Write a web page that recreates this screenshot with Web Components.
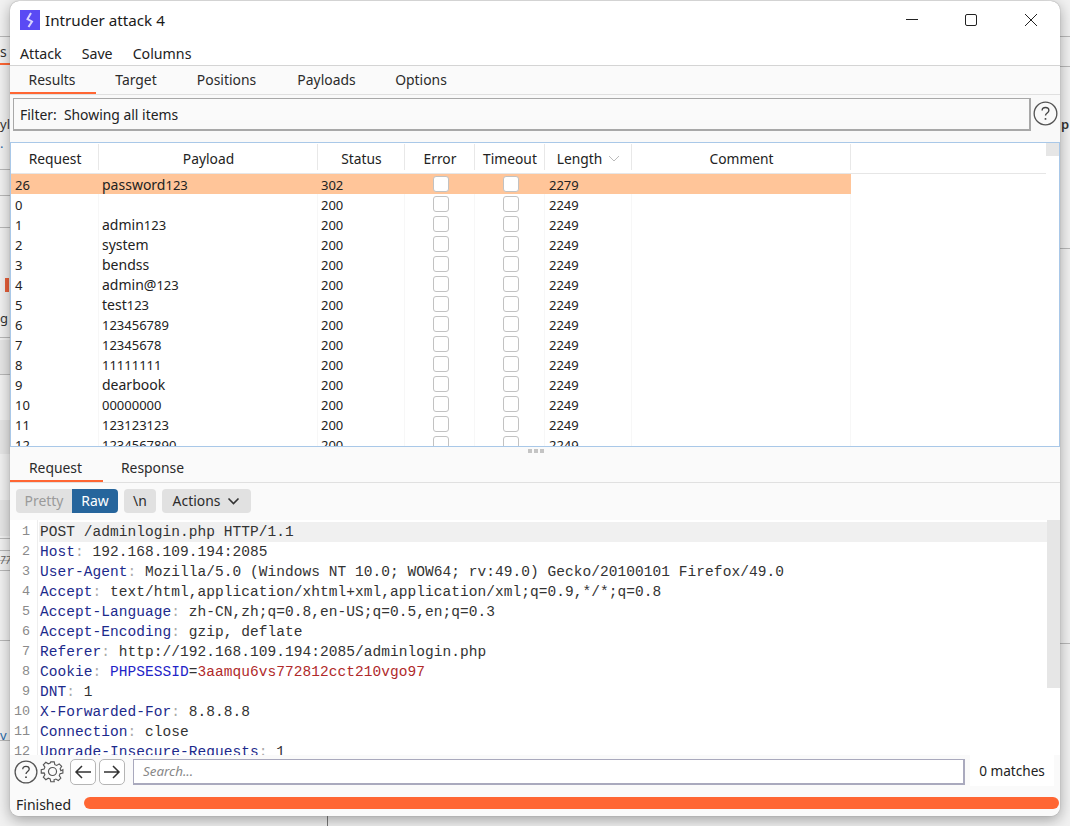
<!DOCTYPE html>
<html><head><meta charset="utf-8"><style>
html,body{margin:0;padding:0;height:100%;overflow:hidden}
body{width:1070px;height:826px;position:relative;font-family:"Noto Sans",sans-serif}
</style></head><body>
<desk-top></desk-top>
<script>
const UI='"Noto Sans","Open Sans",sans-serif';
function def(name,css,html){
  customElements.define(name,class extends HTMLElement{
    constructor(){super();const r=this.attachShadow({mode:'open'});r.innerHTML='<style>'+css+'</style>'+html;}
  });
}
const dg=s=>s.replace(/\d+/g,m=>`<span class="d">${m}</span>`);
def('win-title',`:host{display:flex;flex:none;align-items:center;height:37px;padding-left:10px;font:15.2px ${UI};color:#1a1a1a}
.l{width:20px;height:20px;background:#5a4af4;margin-right:5px;display:block}
.sp{flex:1}.b{width:59px;height:37px;display:flex;align-items:center;justify-content:center}`,
`<svg class="l" viewBox="0 0 20 20"><path d="M11 3 L7.5 9 L12 11.5 L8.5 17" fill="none" stroke="#d9d4ff" stroke-width="2"/></svg><span>Intruder attack 4</span><span class="sp"></span>
<span class="b"><svg width="13" height="13"><path d="M0 6.5H12" stroke="#222" fill="none"/></svg></span>
<span class="b"><svg width="14" height="14"><rect x=".5" y="1.5" width="11" height="11" rx="1.5" stroke="#222" fill="none"/></svg></span>
<span class="b"><svg width="14" height="14"><path d="M1 1L13 13M13 1L1 13" stroke="#222" fill="none"/></svg></span>`);
def('win-menu',`:host{display:flex;flex:none;height:28px;align-items:center;padding-left:10px;gap:20px;font:14.2px ${UI};color:#222;border-bottom:1px solid #d4d4d4;box-sizing:border-box;padding-top:3px}`,
`<span>Attack</span><span>Save</span><span>Columns</span>`);
def('tab-bar',`:host{display:flex;flex:none;height:29px;background:#fafafa;border-bottom:1px solid #e0e0e0;box-sizing:border-box;font:13.9px ${UI};color:#2b2b2b}`,`<slot></slot>`);
def('tab-item',`:host{display:flex;align-items:center;justify-content:center;box-sizing:border-box;border-bottom:2px solid transparent;padding-top:1px}
:host([active]){border-bottom-color:#ff6633;padding-right:2px}`,`<slot></slot>`);
def('filter-bar',`:host{display:flex;flex:none;height:47px;background:#f9f9f9;padding:3px 0 0 3px;box-sizing:border-box;font:13.9px ${UI};color:#222}
.f{width:1018px;height:33px;border:1px solid #a8a8a8;border-bottom-width:2px;border-right-width:2px;box-sizing:border-box;display:flex;align-items:center;padding:1px 0 0 6px;background:#fafafa}
.h{margin:3px 0 0 2px}`,
`<div class="f">Filter:&nbsp; Showing all items</div><help-icon class="h" style="width:25px;height:25px"></help-icon>`);
def('help-icon',`:host{display:block;width:24px;height:24px;flex:none}svg{display:block;width:100%;height:100%}`,
`<svg viewBox="0 0 26 26"><circle cx="13" cy="13" r="11.8" fill="none" stroke="#555" stroke-width="1.4"/><path d="M9.5 10c0-2 1.5-3.2 3.5-3.2s3.5 1.2 3.5 3c0 2.6-3.5 2.7-3.5 5.4" fill="none" stroke="#444" stroke-width="1.4"/><circle cx="13" cy="18.6" r="1" fill="#444"/></svg>`);
const rows=[['26','password123','302','2279'],['0','','200','2249'],['1','admin123','200','2249'],['2','system','200','2249'],['3','bendss','200','2249'],['4','admin@123','200','2249'],['5','test123','200','2249'],['6','123456789','200','2249'],['7','12345678','200','2249'],['8','11111111','200','2249'],['9','dearbook','200','2249'],['10','00000000','200','2249'],['11','123123123','200','2249'],['12','1234567890','200','2249']];
const heads=['Request','Payload','Status','Error','Timeout','Length','Comment'];
def('result-table',`:host{display:block;flex:none;height:305px;border:1px solid #a9c8e8;box-sizing:border-box;background:#fff;overflow:hidden;position:relative;font:14px ${UI};color:#222}
.d{font-size:13px}
.g{display:grid;grid-template-columns:88px 219px 87px 70px 70px 87px 219px 1fr;width:1035px}
.h{height:31px;padding-top:1px;display:flex;align-items:center;justify-content:center;font-size:13.8px;border-bottom:1px solid #e6e6e6;box-sizing:border-box;position:relative}
.h::after{content:"";position:absolute;right:0;top:1px;bottom:3px;width:1px;background:#e8e8e8}
.h.n::after{display:none}
.c{height:20px;line-height:22px;padding-left:3px;box-sizing:border-box;white-space:nowrap;border-right:1px solid #f7f7f7}
.c.a{padding-left:4px}
.c.x{display:flex;align-items:center;justify-content:center;padding:0 0 0 2px}
.c.sel{background:#ffc599;border-right-color:#ffc599}.c.e{border-right:0}
.k{width:16px;height:16px;border:1.5px solid #c2c2c2;border-radius:3px;background:#fff;box-sizing:border-box}
.sb{position:absolute;right:0;top:0;width:13px;height:13px;background:#e6e6e6}
svg{margin-left:6px}`,
`<div class="g">`+heads.map(h=>`<div class="h">${h}${h=='Length'?'<svg width="12" height="7"><path d="M1 1l5 5 5-5" fill="none" stroke="#bbb"/></svg>':''}</div>`).join('')+`<div class="h n"></div>`+
rows.map((r,i)=>{const s=i==0?' sel':'';return `<div class="c a${s}">${dg(r[0])}</div><div class="c${s}">${dg(r[1])}</div><div class="c${s}">${dg(r[2])}</div><div class="c x${s}"><span class="k"></span></div><div class="c x${s}"><span class="k"></span></div><div class="c a${s}">${dg(r[3])}</div><div class="c${s}"></div><div class="c e"></div>`}).join('')+`</div><div class="sb"></div>`);
def('drag-dots',`:host{position:absolute;left:528px;top:449px;display:flex;gap:2px;z-index:2}i{width:4px;height:4px;background:#c4c4c4;display:block}`,`<i></i><i></i><i></i>`);
def('view-bar',`:host{display:flex;flex:none;height:37px;align-items:center;padding:0 0 2px 6px;box-sizing:border-box;font:13.9px ${UI};color:#2b2b2b;gap:6px;background:#fafafa}
.s{display:flex}.b{height:24px;display:flex;align-items:center;justify-content:center;background:#e1e1e1;border-radius:4px;box-sizing:border-box}
.pr{width:56px;color:#9a9a9a;border-radius:4px 0 0 4px}.ra{width:46px;background:#26659c;color:#fff;border-radius:0 4px 4px 0}
.n{width:32px}.a{width:89px;gap:7px}`,
`<div class="s"><div class="b pr">Pretty</div><div class="b ra">Raw</div></div><div class="b n">\\n</div><div class="b a">Actions<svg width="13" height="8"><path d="M1.5 1.5L6.5 6.5 11.5 1.5" fill="none" stroke="#333" stroke-width="1.6"/></svg></div>`);
const req=[
 [['POST /adminlogin.php HTTP/1.1','t']],
 [['Host','k'],[':','c'],[' 192.168.109.194:2085','t']],
 [['User-Agent','k'],[':','c'],[' Mozilla/5.0 (Windows NT 10.0; WOW64; rv:49.0) Gecko/20100101 Firefox/49.0','t']],
 [['Accept','k'],[':','c'],[' text/html,application/xhtml+xml,application/xml;q=0.9,*/*;q=0.8','t']],
 [['Accept-Language','k'],[':','c'],[' zh-CN,zh;q=0.8,en-US;q=0.5,en;q=0.3','t']],
 [['Accept-Encoding','k'],[':','c'],[' gzip, deflate','t']],
 [['Referer','k'],[':','c'],[' http://192.168.109.194:2085/adminlogin.php','t']],
 [['Cookie','k'],[':','c'],[' ','t'],['PHPSESSID','b'],['=','t'],['3aamqu6vs772812cct210vgo97','r']],
 [['DNT','k'],[':','c'],[' 1','t']],
 [['X-Forwarded-For','k'],[':','c'],[' 8.8.8.8','t']],
 [['Connection','k'],[':','c'],[' close','t']],
 [['Upgrade-Insecure-Requests','k'],[':','c'],[' 1','t']]];
def('code-view',`:host{display:block;flex:none;height:235px;overflow:hidden;position:relative;background:#fff;font:14.5px "Liberation Mono",monospace;color:#333}
.w{padding-top:2px;position:relative}
.w::before{content:"";position:absolute;left:27px;top:0;bottom:0;width:1px;background:#eee}
.r{display:flex;height:20px;line-height:20px;white-space:pre}
.n{width:20px;margin-right:9px;flex:none;text-align:right;color:#8a8a8a;font-size:13.4px}
.r.f .x{background:#f0f0f0}.x{flex:1;padding-left:1px;letter-spacing:.05px}
.k{color:#1c2a8c}.c{color:#aaa}.t{color:#333}.b{color:#1f24c8}.r2{color:#b02a2a}
.sb{position:absolute;right:0;top:0;width:13px;height:168px;background:#e6e6e6}`,
`<div class="w">`+req.map((l,i)=>`<div class="r${i==0?' f':''}"><span class="n">${i+1}</span><span class="x">`+l.map(([s,c])=>`<span class="${c=='r'?'r2':c}">${s}</span>`).join('')+`</span></div>`).join('')+`</div><div class="sb"></div>`);
def('search-bar',`:host{display:flex;flex:none;align-items:center;height:35px;padding:0 0 2px 4px;box-sizing:border-box;background:#fafafa;font:13.6px ${UI};color:#222}
.ib{width:26px;height:26px;border:1px solid #b5b5b5;border-radius:5px;box-sizing:border-box;display:flex;align-items:center;justify-content:center;background:#fff;flex:none}
.i{flex:none;width:832px;height:26px;border:1px solid #a9a9bd;border-width:1px 2px 2px 1px;box-sizing:border-box;margin-left:8px;display:flex;align-items:center;padding-left:9px;background:#fff;font:italic 13.4px ${UI};color:#888}
.m{width:84px;height:32px;background:#fff;margin:-3px 0 0 5px;display:flex;align-items:center;justify-content:center}`,
`<help-icon></help-icon><svg width="25" height="25" viewBox="0 0 26 26" style="margin:0 5px 0 2px;flex:none"><path d="M11 2h4l.7 3.2 2.2.9 2.8-1.8 2.9 2.9-1.8 2.8.9 2.2L25 11v4l-3.3.7-.9 2.2 1.8 2.8-2.9 2.9-2.8-1.8-2.2.9L15 25h-4l-.7-3.3-2.2-.9-2.8 1.8-2.9-2.9 1.8-2.8-.9-2.2L0 15v-4l3.3-.7.9-2.2-1.8-2.8 2.9-2.9 2.8 1.8 2.2-.9z" transform="translate(1.3 1.2) scale(.9)" fill="none" stroke="#555" stroke-width="1.3"/><circle cx="13" cy="13" r="4.2" fill="none" stroke="#555" stroke-width="1.2"/></svg>
<div class="ib"><svg width="18" height="14"><path d="M17 7H2M8 1L2 7l6 6" fill="none" stroke="#333" stroke-width="1.5"/></svg></div><div class="ib" style="margin-left:3px"><svg width="18" height="14"><path d="M1 7h15M10 1l6 6-6 6" fill="none" stroke="#333" stroke-width="1.5"/></svg></div>
<div class="i">Search...</div><div class="m">0 matches</div>`);
def('status-bar',`:host{display:flex;flex:none;align-items:center;height:26px;padding:1px 0 0 6px;box-sizing:border-box;background:#fafafa;font:14px ${UI};color:#222}
.t{margin-top:2px}.p{flex:1;height:12px;border-radius:6px;background:#ff6633;margin:-2px 1px 0 13px}`,`<span class="t">Finished</span><div class="p"></div>`);
def('app-window',`:host{position:absolute;left:10px;top:1px;width:1050px;height:815px;background:#fff;border-radius:9px;box-shadow:0 0 1px #777,0 4px 14px rgba(0,0,0,.33);overflow:hidden;display:flex;flex-direction:column}`,`<slot></slot>`);
const lines=[36,169,195,227,337,374,538,550,560,570,640,740].map(y=>`<div class="ln" style="left:0;top:${y}px;width:10px"></div>`).join('');
const stripes=[[340,34],[420,34],[500,36]].map(([y,h])=>`<div class="ln" style="left:0;top:${y}px;width:10px;height:${h}px;background:#e6e6e6"></div>`).join('');
def('desk-top',`:host{display:block;position:absolute;inset:0;background:#f1f1f1;overflow:hidden;font:13px ${UI};color:#333}
.t{position:absolute;line-height:16px;width:10px;overflow:hidden;white-space:nowrap}.ln{position:absolute;height:1px;background:#b8b8b8}`,
stripes+lines+`
<div class="t" style="left:0;top:44px;font-size:14px">s</div><div class="ln" style="left:0;top:63px;width:10px;height:2px;background:#ff6633"></div>
<div class="t" style="left:0;top:116px">yl</div><div class="t" style="left:0;top:135px;color:#2a6aa8">.</div>
<div class="ln" style="left:5px;top:278px;width:4px;height:14px;background:#e8603a"></div>
<div class="t" style="left:0;top:310px">g</div>
<div class="t" style="left:0;top:552px;font-size:10px;font-style:italic;color:#666">77</div>
<div class="t" style="left:0;top:727px;color:#2a6aa8">v</div>
<div class="t" style="left:1061px;top:116px;font-weight:600;width:9px">p</div>
<div class="ln" style="left:1060px;top:36px;width:10px"></div><div class="ln" style="left:1060px;top:66px;width:10px"></div><div class="ln" style="left:1060px;top:248px;width:10px"></div><div class="ln" style="left:1060px;top:643px;width:10px"></div>
<div class="ln" style="left:327px;top:816px;width:1px;height:10px;background:#777"></div>
<app-window>
<win-title></win-title><win-menu></win-menu>
<tab-bar><tab-item active style="width:86px">Results</tab-item><tab-item style="width:80px">Target</tab-item><tab-item style="width:101px">Positions</tab-item><tab-item style="width:99px">Payloads</tab-item><tab-item style="width:90px">Options</tab-item></tab-bar>
<filter-bar></filter-bar><result-table></result-table>
<tab-bar style="height:36px;padding-top:6px"><tab-item active style="width:93px">Request</tab-item><tab-item style="width:99px">Response</tab-item></tab-bar>
<view-bar></view-bar><code-view></code-view><search-bar></search-bar><status-bar></status-bar>
</app-window><drag-dots></drag-dots>`);
</script></body></html>
